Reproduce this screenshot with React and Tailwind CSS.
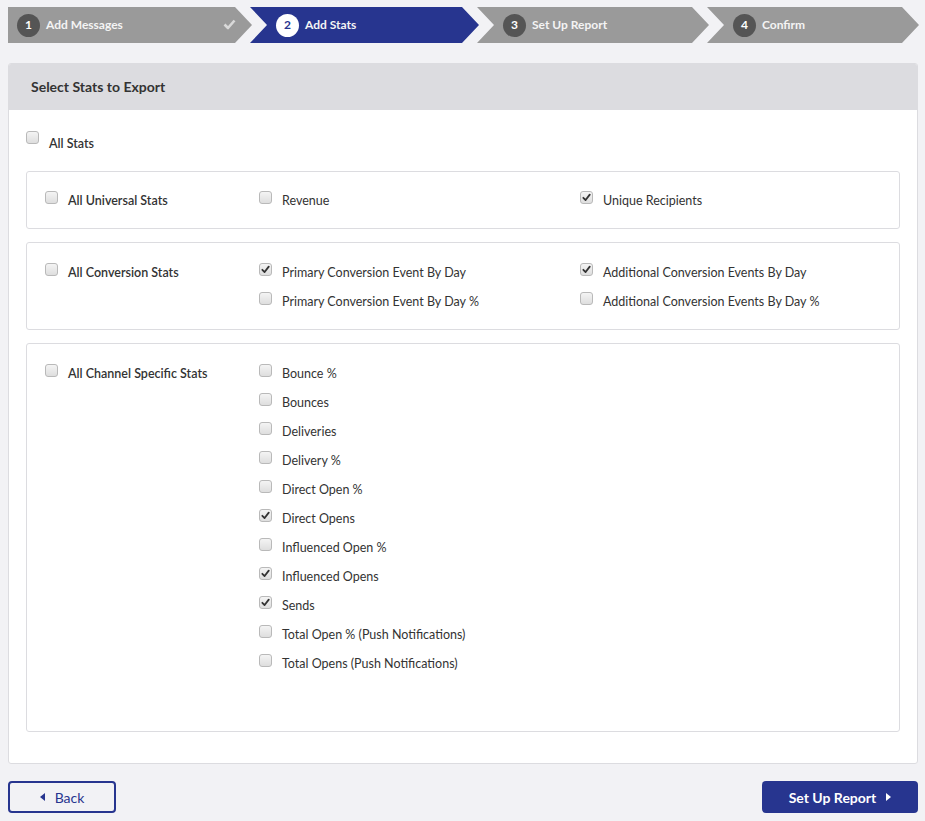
import React from "react";

function Box({ checked }) {
  return (
    <span className="relative inline-flex h-[13px] w-[13px] shrink-0 items-center justify-center rounded-[3px] border border-[#b9b9b9] bg-gradient-to-b from-[#f4f4f4] to-[#dedede]">
      {checked && (
        <svg width="9" height="9" viewBox="0 0 10 10" className="block">
          <path d="M1.5 5.3 L4 7.8 L8.6 1.8" fill="none" stroke="#333" strokeWidth="2" strokeLinecap="round" strokeLinejoin="round" />
        </svg>
      )}
    </span>
  );
}

function Item({ label, checked, bold }) {
  return (
    <div className="flex h-[29px] items-start pt-[5px]">
      <Box checked={checked} />
      <span className={`ml-[10px] -mt-[1px] leading-[22px] text-[12.5px] text-[#333] ${bold ? "font-semibold" : "font-normal"}`}>{label}</span>
    </div>
  );
}

function Step({ n, label, active, first, done, w }) {
  const clip = first
    ? "[clip-path:polygon(0_0,calc(100%_-_17px)_0,100%_50%,calc(100%_-_17px)_100%,0_100%)]"
    : "[clip-path:polygon(0_0,calc(100%_-_17px)_0,100%_50%,calc(100%_-_17px)_100%,0_100%,17px_50%)]";
  return (
    <div
      className={`${clip} ${w} ${first ? "pl-[9px]" : "-ml-[2px] pl-[26px]"} ${active ? "bg-[#27358f]" : "bg-[#9a9a9a]"} relative flex h-[36px] shrink-0 items-center`}
    >
      <span
        className={`flex h-[23px] w-[23px] items-center justify-center rounded-full text-[12px] font-bold ${active ? "bg-white text-[#27358f]" : "bg-[#555] text-white"}`}
      >
        {n}
      </span>
      <span className="ml-[6px] text-[12px] font-bold text-[#f4f4f4]">{label}</span>
      {done && (
        <svg width="13" height="11" viewBox="0 0 13 11" className="absolute left-[215px] top-[12px]">
          <path d="M1.5 5.5 L5 9 L11.5 1.5" fill="none" stroke="#d9d9d9" strokeWidth="2.6" strokeLinejoin="round" />
        </svg>
      )}
    </div>
  );
}

export default function App() {
  const channel = [
    ["Bounce %", false],
    ["Bounces", false],
    ["Deliveries", false],
    ["Delivery %", false],
    ["Direct Open %", false],
    ["Direct Opens", true],
    ["Influenced Open %", false],
    ["Influenced Opens", true],
    ["Sends", true],
    ["Total Open % (Push Notifications)", false],
    ["Total Opens (Push Notifications)", false],
  ];
  return (
    <div className="min-h-[821px] w-[925px] bg-[#f2f2f5] pl-[8px] pt-[7px] font-['Lato',sans-serif]">
      <div className="flex">
        <Step n="1" label="Add Messages" first done w="w-[244px]" />
        <Step n="2" label="Add Stats" active w="w-[229px]" />
        <Step n="3" label="Set Up Report" w="w-[232px]" />
        <Step n="4" label="Confirm" w="w-[212px]" />
      </div>

      <div className="mt-[20px] w-[910px] overflow-hidden rounded-[3px] border border-[#dcdce0] bg-white">
        <div className="flex h-[46px] items-center bg-[#dcdce0] pb-[2px] pl-[22px]">
          <span className="text-[14px] font-bold text-[#333]">Select Stats to Export</span>
        </div>
        <div className="px-[17px] pb-[31px] pt-[21px]">
          <div className="flex h-[29px] items-start">
            <Box />
            <span className="ml-[10px] mt-[5px] text-[12.5px] font-semibold leading-[16px] text-[#333]">All Stats</span>
          </div>

          <div className="mt-[11px] flex flex-col gap-[13px]">
            <div className="grid grid-cols-[214px_321px_1fr] rounded-[3px] border border-[#dcdce0] px-[18px] pb-[13px] pt-[14px]">
              <Item label="All Universal Stats" bold />
              <Item label="Revenue" />
              <Item label="Unique Recipients" checked />
            </div>
            <div className="grid grid-cols-[214px_321px_1fr] rounded-[3px] border border-[#dcdce0] px-[18px] pb-[13px] pt-[15px]">
              <Item label="All Conversion Stats" bold />
              <div>
                <Item label="Primary Conversion Event By Day" checked />
                <Item label="Primary Conversion Event By Day %" />
              </div>
              <div>
                <Item label="Additional Conversion Events By Day" checked />
                <Item label="Additional Conversion Events By Day %" />
              </div>
            </div>
            <div className="grid grid-cols-[214px_321px_1fr] rounded-[3px] border border-[#dcdce0] px-[18px] pb-[53px] pt-[15px]">
              <Item label="All Channel Specific Stats" bold />
              <div>
                {channel.map(([l, c]) => (
                  <Item key={l} label={l} checked={c} />
                ))}
              </div>
              <div />
            </div>
          </div>
        </div>
      </div>

      <div className="mt-[17px] flex w-[910px] justify-between">
        <button className="flex h-[32px] w-[108px] items-center justify-center rounded-[4px] border-2 border-[#27358f] bg-transparent text-[14px] text-[#27358f]">
          <svg width="5" height="8" viewBox="0 0 5 8" className="mr-[10px]">
            <path d="M5 0 L0 4 L5 8 Z" fill="#27358f" />
          </svg>
          Back
        </button>
        <button className="flex h-[32px] w-[156px] items-center justify-center rounded-[4px] bg-[#27358f] text-[14px] font-bold text-white">
          Set Up Report
          <svg width="5" height="8" viewBox="0 0 5 8" className="ml-[10px]">
            <path d="M0 0 L5 4 L0 8 Z" fill="#fff" />
          </svg>
        </button>
      </div>
    </div>
  );
}
